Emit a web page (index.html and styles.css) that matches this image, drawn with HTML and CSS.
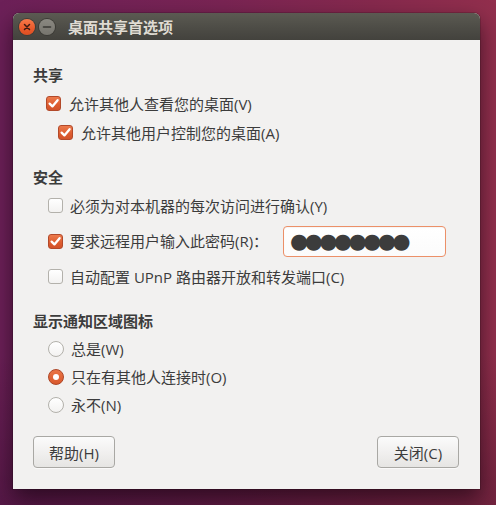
FILE: index.html
```html
<!DOCTYPE html>
<html lang="zh-CN">
<head>
<meta charset="utf-8">
<title>桌面共享首选项</title>
<link rel="stylesheet" href="styles.css">
</head>
<body>
<div class="desktop">
  <div class="window">
    <div class="titlebar">
      <div class="wbtns">
        <span class="wbtn close"><svg width="16" height="16" viewBox="0 0 16 16"><path d="M5.5 5.5 L10.5 10.5 M10.5 5.5 L5.5 10.5" stroke="#3b1a12" stroke-width="1.5" stroke-linecap="round"/></svg></span>
        <span class="wbtn min"><svg width="16" height="16" viewBox="0 0 16 16"><path d="M4.5 8 H11.5" stroke="#3a3935" stroke-width="1.6" stroke-linecap="round"/></svg></span>
      </div>
      <div class="title">桌面共享首选项</div>
    </div>
    <div class="content">
      <section class="sec">
        <div class="heading">共享</div>
        <label class="row share"><span class="cb on"><svg width="15" height="15" viewBox="0 0 15 15"><path d="M3.6 7.6 L6.4 10.4 L11.6 4.2" fill="none" stroke="#fff" stroke-width="2.3" stroke-linecap="round" stroke-linejoin="round"/></svg></span><span class="lbl">允许其他人查看您的桌面(V)</span></label>
        <label class="row share sub"><span class="cb on"><svg width="15" height="15" viewBox="0 0 15 15"><path d="M3.6 7.6 L6.4 10.4 L11.6 4.2" fill="none" stroke="#fff" stroke-width="2.3" stroke-linecap="round" stroke-linejoin="round"/></svg></span><span class="lbl">允许其他用户控制您的桌面(A)</span></label>
      </section>
      <section class="sec">
        <div class="heading">安全</div>
        <label class="row"><span class="cb"></span><span class="lbl">必须为对本机器的每次访问进行确认(Y)</span></label>
        <div class="row pwrow"><span class="cb on"><svg width="15" height="15" viewBox="0 0 15 15"><path d="M3.6 7.6 L6.4 10.4 L11.6 4.2" fill="none" stroke="#fff" stroke-width="2.3" stroke-linecap="round" stroke-linejoin="round"/></svg></span><span class="lbl pwlbl">要求远程用户输入此密码(R)：</span><div class="entry">●●●●●●●●</div></div>
        <label class="row last"><span class="cb"></span><span class="lbl">自动配置 UPnP 路由器开放和转发端口(C)</span></label>
      </section>
      <section class="sec">
        <div class="heading">显示通知区域图标</div>
        <label class="row radio"><span class="rb"></span><span class="lbl">总是(W)</span></label>
        <label class="row radio"><span class="rb on"></span><span class="lbl">只在有其他人连接时(O)</span></label>
        <label class="row radio"><span class="rb"></span><span class="lbl">永不(N)</span></label>
      </section>
      <div class="actions">
        <button class="btn">帮助(H)</button>
        <button class="btn">关闭(C)</button>
      </div>
    </div>
  </div>
</div>
</body>
</html>
```
FILE: styles.css
```css
html, body {
  margin: 0;
  padding: 0;
}
body {
  width: 496px;
  height: 505px;
  overflow: hidden;
  font-family: "Open Sans", "Noto Sans CJK SC", sans-serif;
  font-size: 15px;
  color: #3c3c3c;
}
.desktop {
  width: 496px;
  height: 505px;
  box-sizing: border-box;
  padding: 13px 0 0 13px;
  background:
    linear-gradient(180deg, rgba(0,0,0,0) 0%, rgba(0,0,0,0) 70%, rgba(20,0,20,0.25) 100%),
    linear-gradient(90deg, #6c2058 0%, #792453 45%, #86294d 75%, #922f4d 100%);
}
.window {
  width: 467px;
  height: 476px;
  background: #f2f1f0;
  border-radius: 6px 6px 0 0;
  box-shadow: 0 10px 22px rgba(15, 0, 10, 0.6), 0 0 0 1px rgba(0,0,0,0.15);
  display: flex;
  flex-direction: column;
}
.titlebar {
  height: 27px;
  flex: none;
  display: flex;
  align-items: center;
  padding-left: 6px;
  border-radius: 6px 6px 0 0;
  background: linear-gradient(180deg, #5b5a52 0%, #4c4b45 60%, #43423d 100%);
}
.wbtns {
  display: flex;
  gap: 4px;
}
.wbtn {
  width: 16px;
  height: 16px;
  border-radius: 50%;
  display: block;
  box-sizing: border-box;
}
.wbtn svg { display: block; }
.wbtn.close {
  background: linear-gradient(180deg, #f77a4a 0%, #e9592b 60%, #dd4f22 100%);
  box-shadow: 0 0 0 1px #3f3c37;
}
.wbtn.min {
  background: linear-gradient(180deg, #8a8881 0%, #77756e 100%);
  box-shadow: 0 0 0 1px #3c3b36;
}
.title {
  margin-left: 13px;
  font-weight: bold;
  color: #dfdbd2;
  font-size: 15px;
  line-height: 20px;
  font-family: "Noto Sans CJK SC", sans-serif;
}
.content {
  flex: 1;
  display: flex;
  flex-direction: column;
  padding: 25px 21px 21px 20px;
}
.sec {
  display: flex;
  flex-direction: column;
  margin-bottom: 20px;
}
.heading {
  font-weight: bold;
  line-height: 20px;
  height: 20px;
  margin-bottom: 4px;
}
.row {
  display: flex;
  align-items: center;
  height: 29px;
  padding-left: 15px;
  line-height: 20px;
}
.row.share { padding-left: 13px; }
.row.share.sub { padding-left: 25px; }
.row.share .lbl { margin-left: 8px; }
.row.pwrow { height: 42px; }
.row.radio { height: 28px; }
.sec:last-of-type { margin-bottom: 0; }
.lbl {
  margin-left: 7px;
  white-space: nowrap;
}
.cb {
  width: 15px;
  height: 15px;
  box-sizing: border-box;
  border-radius: 3px;
  border: 1px solid #b3b1ab;
  background: linear-gradient(180deg, #ffffff 0%, #f3f2f1 100%);
  flex: none;
  position: relative;
}
.cb.on {
  border-color: #b2492a;
  background: linear-gradient(180deg, #ec7a4c 0%, #dd5c2f 60%, #d2522a 100%);
}
.cb svg {
  position: absolute;
  left: -1px;
  top: -1px;
  display: block;
}
.rb {
  width: 16px;
  height: 16px;
  box-sizing: border-box;
  border-radius: 50%;
  border: 1px solid #b3b1ab;
  background: linear-gradient(180deg, #ffffff 0%, #f3f2f1 100%);
  flex: none;
  display: flex;
  align-items: center;
  justify-content: center;
}
.rb.on {
  border-color: #ad4526;
  background: linear-gradient(180deg, #ea7546 0%, #d9582c 100%);
}
.rb.on::after {
  content: "";
  width: 6px;
  height: 6px;
  border-radius: 50%;
  background: #ffffff;
}
.pwlbl {
  width: 213px;
  flex: none;
}
.entry {
  width: 163px;
  height: 31px;
  box-sizing: border-box;
  border: 1px solid #ec9068;
  border-radius: 4px;
  background: linear-gradient(180deg, #ffffff 0%, #fbfbfb 100%);
  box-shadow: inset 0 1px 1px rgba(0,0,0,0.04);
  padding-left: 6px;
  font-family: "DejaVu Sans", sans-serif;
  font-size: 21px;
  line-height: 29px;
  color: #3c3c3c;
  letter-spacing: -3.7px;
  white-space: nowrap;
  overflow: hidden;
}
.actions {
  margin-top: 17px;
  display: flex;
  justify-content: space-between;
}
.btn {
  width: 82px;
  height: 32px;
  box-sizing: border-box;
  border: 1px solid #a9a8a4;
  border-radius: 4px;
  background: linear-gradient(180deg, #fbfbfb 0%, #f1f0ef 50%, #e6e5e3 100%);
  font-family: "Open Sans", "Noto Sans CJK SC", sans-serif;
  font-size: 15px;
  color: #3c3c3c;
  padding: 0;
  box-shadow: 0 1px 0 rgba(255,255,255,0.6);
}
```
